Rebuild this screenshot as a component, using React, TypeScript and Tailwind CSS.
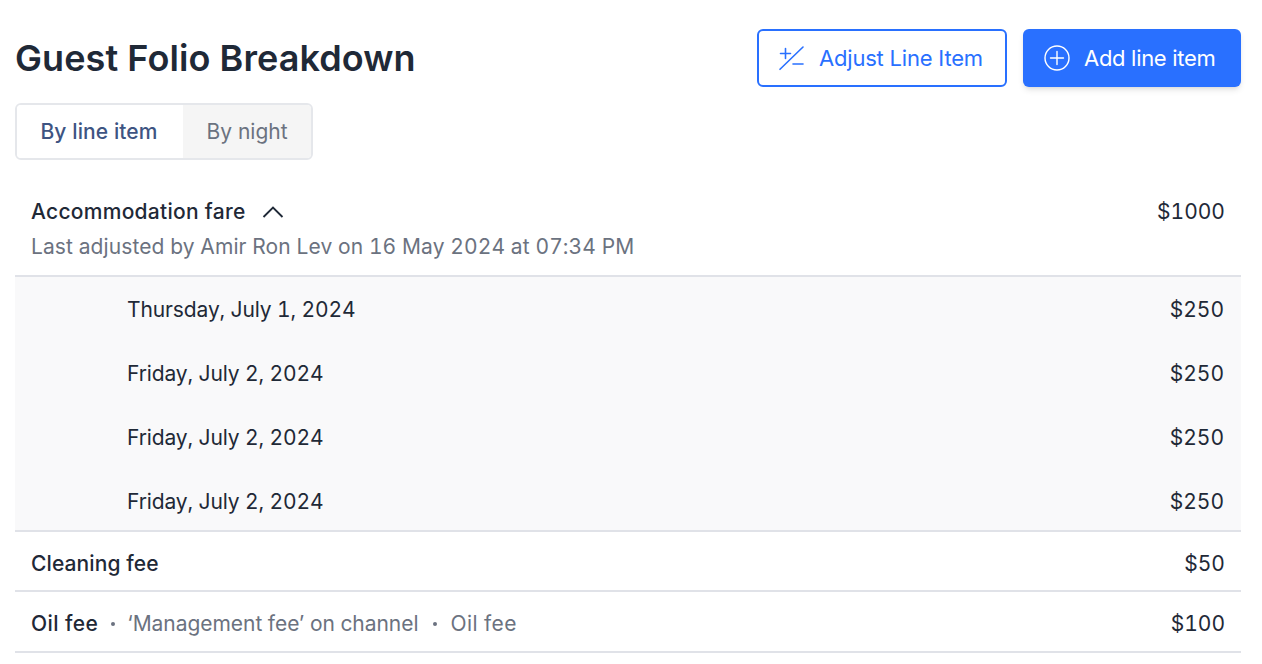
const nights = [
  "Thursday, July 1, 2024",
  "Friday, July 2, 2024",
  "Friday, July 2, 2024",
  "Friday, July 2, 2024",
];

const App = () => {
  return (
    <div className="w-[1262px] h-[664px] overflow-hidden bg-white pl-[15px] pr-[21px] pt-[29px] font-['Inter',sans-serif]">
      <div className="flex flex-row items-center justify-between h-[58px]">
        <h1 className="text-[36px] leading-[44px] font-semibold text-[#1f2937] tracking-[0.08px]">
          Guest Folio Breakdown
        </h1>
        <div className="flex flex-row gap-4">
          <button className="w-[250px] h-[58px] flex flex-row items-center justify-start pl-[20px] gap-[14px] bg-white border-2 border-[#2970ff] rounded-[6px] text-[#2970ff] text-[22px] tracking-[-0.2px]">
            <svg width="26" height="26" viewBox="0 0 26 26" fill="none" stroke="#2970ff" strokeWidth="1.6" strokeLinecap="round">
              <path d="M1 24.3 L24 2" />
              <path d="M1.5 8.5 H11.5 M6.5 3.5 V13.5" />
              <path d="M14 19 H24" />
            </svg>
            Adjust Line Item
          </button>
          <button className="w-[218px] h-[58px] flex flex-row items-center justify-start pl-[21px] gap-[14px] bg-[#2970ff] rounded-[6px] text-white text-[22px] tracking-[-0.3px] shadow-md">
            <svg width="26" height="26" viewBox="0 0 26 26" fill="none" stroke="#ffffff" strokeWidth="1.4" strokeLinecap="round">
              <circle cx="13" cy="13" r="12" />
              <path d="M13 6.5 V19.5 M6.5 13 H19.5" />
            </svg>
            Add line item
          </button>
        </div>
      </div>

      <div className="flex flex-row w-[298px] h-[57px] mt-4 border-2 border-[#e5e7eb] rounded-[6px] overflow-hidden text-[21px]">
        <div className="w-[166px] flex items-center justify-center pr-[2px] bg-white font-medium text-[#3e5482] tracking-[0.1px]">
          By line item
        </div>
        <div className="flex-1 flex items-center justify-center bg-[#f5f5f5] text-[#6b7280]">
          By night
        </div>
      </div>

      <div className="h-[117px] border-b-2 border-[#e0e2e8] px-4 pt-[35px] flex flex-row justify-between tabular-nums">
        <div>
          <div className="flex flex-row items-center gap-[16px] h-[34px]">
            <span className="text-[21px] font-medium text-[#1f2937] tracking-[0.28px]">Accommodation fare</span>
            <svg width="22" height="14" viewBox="0 0 22 14" fill="none" stroke="#1f2937" strokeWidth="1.9">
              <path d="M1.5 12 L11 2.5 L20.5 12" />
            </svg>
          </div>
          <p className="text-[21px] leading-[36px] text-[#6b7280] tracking-[0.09px]">
            Last adjusted by Amir Ron Lev on 16 May 2024 at 07:34 PM
          </p>
        </div>
        <span className="text-[21px] leading-[34px] text-[#1f2937]">$1000</span>
      </div>

      <div className="h-[255px] overflow-hidden pt-px bg-[#f9f9fa] border-b-2 border-[#e0e2e8] tabular-nums">
        {nights.map((night, idx) => (
          <div key={idx} className="h-[64px] pl-[112px] pr-[17px] flex flex-row items-center justify-between text-[21px] text-[#1f2937]">
            <span className="tracking-[-0.12px]">{night}</span>
            <span>$250</span>
          </div>
        ))}
      </div>

      <div className="h-[60px] px-4 pt-[5px] border-b-2 border-[#e0e2e8] flex flex-row items-center justify-between text-[21px] text-[#1f2937] tabular-nums">
        <span className="font-medium tracking-[0.1px]">Cleaning fee</span>
        <span>$50</span>
      </div>

      <div className="h-[61px] px-4 pt-[5px] border-b-2 border-[#e0e2e8] flex flex-row items-center justify-between text-[21px] text-[#1f2937] tabular-nums">
        <div className="flex flex-row items-center">
          <span className="font-medium tracking-[0.4px]">Oil fee</span>
          <span className="w-[4px] h-[4px] rounded-full bg-[#6b7280] ml-[13px] mr-[12px]" />
          <span className="text-[#6b7280] tracking-[-0.04px]">‘Management fee’ on channel</span>
          <span className="w-[4px] h-[4px] rounded-full bg-[#6b7280] ml-[15px] mr-[13px]" />
          <span className="text-[#6b7280] tracking-[0.4px]">Oil fee</span>
        </div>
        <span>$100</span>
      </div>
    </div>
  );
};

export default App;
